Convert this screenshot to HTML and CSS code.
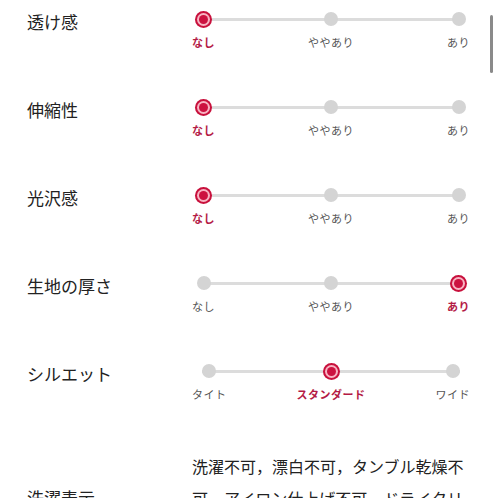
FILE: index.html
```html
<!DOCTYPE html>
<html lang="ja">
<head>
<meta charset="utf-8">
<link rel="stylesheet" href="styles.css">
</head>
<body>
<div class="spec">
  <div class="row">
    <div class="name">透け感</div>
    <div class="slider">
      <div class="step on"><span class="dot"></span><span class="lab">なし</span></div>
      <div class="step"><span class="dot"></span><span class="lab">ややあり</span></div>
      <div class="step"><span class="dot"></span><span class="lab">あり</span></div>
    </div>
  </div>
  <div class="row">
    <div class="name">伸縮性</div>
    <div class="slider">
      <div class="step on"><span class="dot"></span><span class="lab">なし</span></div>
      <div class="step"><span class="dot"></span><span class="lab">ややあり</span></div>
      <div class="step"><span class="dot"></span><span class="lab">あり</span></div>
    </div>
  </div>
  <div class="row">
    <div class="name">光沢感</div>
    <div class="slider">
      <div class="step on"><span class="dot"></span><span class="lab">なし</span></div>
      <div class="step"><span class="dot"></span><span class="lab">ややあり</span></div>
      <div class="step"><span class="dot"></span><span class="lab">あり</span></div>
    </div>
  </div>
  <div class="row">
    <div class="name">生地の厚さ</div>
    <div class="slider">
      <div class="step"><span class="dot"></span><span class="lab">なし</span></div>
      <div class="step"><span class="dot"></span><span class="lab">ややあり</span></div>
      <div class="step on"><span class="dot"></span><span class="lab">あり</span></div>
    </div>
  </div>
  <div class="row">
    <div class="name">シルエット</div>
    <div class="slider">
      <div class="step"><span class="dot"></span><span class="lab">タイト</span></div>
      <div class="step on"><span class="dot"></span><span class="lab">スタンダード</span></div>
      <div class="step"><span class="dot"></span><span class="lab">ワイド</span></div>
    </div>
  </div>
  <div class="row wash">
    <div class="name">洗濯表示</div>
    <div class="value">洗濯不可，漂白不可，タンブル乾燥不可，アイロン仕上げ不可，ドライクリーニング不可</div>
  </div>
</div>
<div class="scrollbar"></div>
</body>
</html>
```

FILE: styles.css
```css
* { box-sizing: border-box; }
html, body { margin: 0; padding: 0; background: #fff; overflow: hidden; }
body {
  font-family: "Noto Sans CJK JP", "Noto Sans", sans-serif;
  color: #222;
  width: 498px;
  height: 498px;
}
.spec {
  padding: 10px 28px 0 27px;
}
.row {
  display: grid;
  grid-template-columns: 165px 1fr;
  height: 88px;
  align-items: start;
}
.name {
  font-size: 17px;
  line-height: 24px;
}
.slider {
  position: relative;
  display: flex;
  justify-content: space-between;
}
.slider::before {
  content: "";
  position: absolute;
  left: 10px;
  right: 10px;
  top: 8px;
  height: 3px;
  background: #dcdcdc;
}
.step {
  position: relative;
  display: flex;
  flex-direction: column;
  align-items: center;
}
.dot {
  width: 18px;
  height: 18px;
  display: flex;
  align-items: center;
  justify-content: center;
}
.dot::after {
  content: "";
  width: 14px;
  height: 14px;
  border-radius: 50%;
  background: #d4d4d4;
}
.step.on .dot::after {
  width: 9px;
  height: 9px;
  background: #cc1240;
  box-shadow: 0 0 0 2px #f8b4c3, 0 0 0 4px #c8103c;
}
.lab {
  margin-top: 7px;
  font-size: 11px;
  line-height: 14px;
  color: #555;
  letter-spacing: 0.5px;
}
.step.on .lab {
  color: #b41a45;
  font-weight: 700;
}
.wash {
  height: auto;
  align-items: center;
}
.value {
  font-size: 16px;
  line-height: 32px;
  width: 276px;
}
.scrollbar {
  position: fixed;
  left: 490px;
  top: 15px;
  width: 3px;
  height: 58px;
  border-radius: 2px;
  background: #8a8a8a;
}
```
